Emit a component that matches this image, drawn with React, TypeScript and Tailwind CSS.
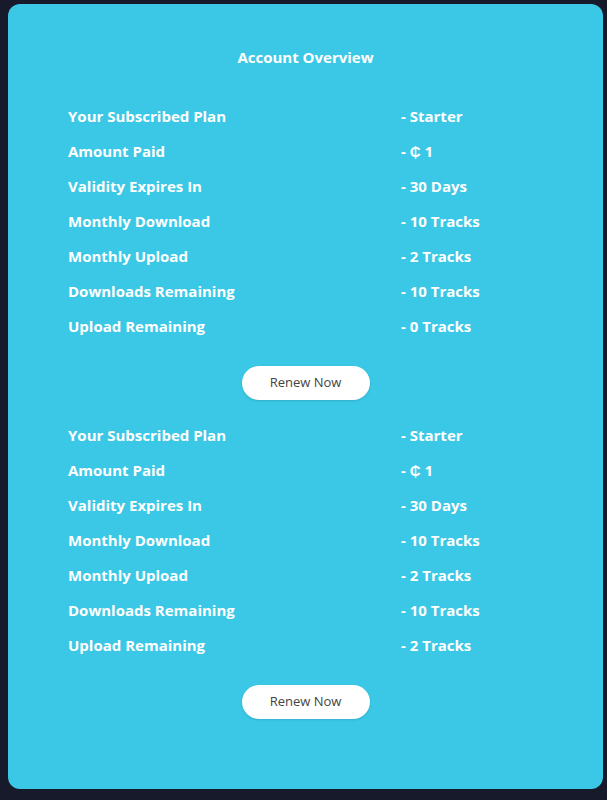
const rows1: [string, string][] = [
  ['Your Subscribed Plan', '- Starter'],
  ['Amount Paid', '- ₵ 1'],
  ['Validity Expires In', '- 30 Days'],
  ['Monthly Download', '- 10 Tracks'],
  ['Monthly Upload', '- 2 Tracks'],
  ['Downloads Remaining', '- 10 Tracks'],
  ['Upload Remaining', '- 0 Tracks'],
];

const rows2: [string, string][] = [
  ['Your Subscribed Plan', '- Starter'],
  ['Amount Paid', '- ₵ 1'],
  ['Validity Expires In', '- 30 Days'],
  ['Monthly Download', '- 10 Tracks'],
  ['Monthly Upload', '- 2 Tracks'],
  ['Downloads Remaining', '- 10 Tracks'],
  ['Upload Remaining', '- 2 Tracks'],
];

function PlanDetails({ rows }: { rows: [string, string][] }) {
  return (
    <div className="flex flex-col px-[60px]">
      {rows.map(([label, value], i) => (
        <div key={i} className="flex h-[35px] items-center text-[15px] font-bold text-white">
          <span className="w-[333px]">{label}</span>
          <span>{value}</span>
        </div>
      ))}
    </div>
  );
}

function RenewButton() {
  return (
    <div className="flex justify-center">
      <button className="h-[34px] w-[128px] rounded-full bg-white text-[13px] text-[#444] shadow-sm">
        Renew Now
      </button>
    </div>
  );
}

export default function App() {
  return (
    <div
      className="min-h-[800px] bg-[#171a2b] pl-2 pr-1 pt-1 pb-[11px]"
      style={{ fontFamily: '"Open Sans", sans-serif' }}
    >
      <div className="rounded-xl bg-[#3bc8e6] pt-[43px] pb-[70px]">
        <h2 className="text-center text-[15px] font-bold leading-5 text-white">Account Overview</h2>
        <div className="mt-[32px]">
          <PlanDetails rows={rows1} />
        </div>
        <div className="mt-[22px]">
          <RenewButton />
        </div>
        <div className="mt-[18px]">
          <PlanDetails rows={rows2} />
        </div>
        <div className="mt-[22px]">
          <RenewButton />
        </div>
      </div>
    </div>
  );
}
